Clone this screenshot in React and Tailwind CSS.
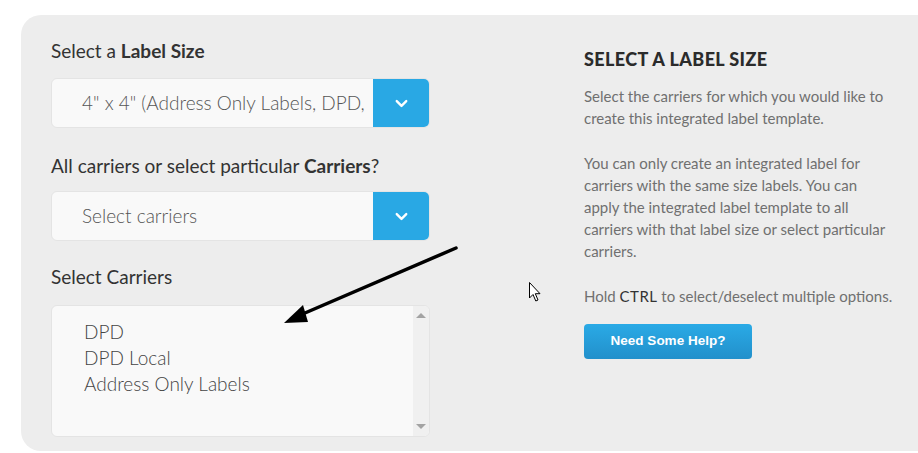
import { ChevronDown } from 'lucide-react';

const font = { fontFamily: 'Lato, "Open Sans", sans-serif' };

const SelectBox = ({ text }) => (
  <div className="flex h-[50px] w-[379px] rounded-[6px] border border-[#e4e4e4] bg-[#f9f9f9] overflow-hidden">
    <div className="flex-1 flex items-center pl-[30px] overflow-hidden whitespace-nowrap text-[19px] font-light text-[#555]">
      {text}
    </div>
    <div className="w-[57px] -my-px -mr-px flex items-center justify-center bg-[#29a8e4] rounded-r-[6px]">
      <ChevronDown size={19} strokeWidth={3} className="text-white" />
    </div>
  </div>
);

const App = () => {
  return (
    <div className="relative w-[918px] h-[453px] bg-white pt-[15px] pl-[21px] overflow-hidden" style={font}>
      <div className="flex h-[436px] bg-[#ededed] rounded-l-[20px] pl-[30px] pt-[24px]">
        <div className="w-[379px] text-[#333]">
          <div className="text-[19px] leading-[24px] mb-[15px]">
            Select a <span className="font-bold">Label Size</span>
          </div>
          <SelectBox text={'4" x 4" (Address Only Labels, DPD,'} />
          <div className="text-[19px] leading-[24px] mt-[26px] mb-[13px]">
            All carriers or select particular <span className="font-bold">Carriers</span>?
          </div>
          <SelectBox text="Select carriers" />
          <div className="text-[19px] leading-[24px] mt-[24px] mb-[16px]">Select Carriers</div>
          <div className="flex h-[132px] w-[379px] rounded-[6px] border border-[#e4e4e4] bg-[#f9f9f9] overflow-hidden">
            <div className="flex-1 pt-[13px] pl-[32px] text-[19px] leading-[26px] font-light text-[#444]">
              <div>DPD</div>
              <div>DPD Local</div>
              <div>Address Only Labels</div>
            </div>
            <div className="w-[16px] bg-[#f0f0f0] flex flex-col items-center justify-between py-[7px]">
              <div className="w-0 h-0 border-l-[5px] border-r-[5px] border-b-[5px] border-l-transparent border-r-transparent border-b-[#a3a3a3]" />
              <div className="w-0 h-0 border-l-[5px] border-r-[5px] border-t-[5px] border-l-transparent border-r-transparent border-t-[#a3a3a3]" />
            </div>
          </div>
        </div>

        <div className="ml-[154px] mt-[9px] w-[330px]">
          <h2 className="text-[18px] leading-[22px] font-black uppercase text-[#2b2b2b] tracking-[0.4px]">
            Select a Label Size
          </h2>
          <div className="mt-[15px] text-[15px] leading-[22px] text-[#707070] whitespace-nowrap">
            <p>
              Select the carriers for which you would like to
              <br />
              create this integrated label template.
            </p>
            <p className="mt-[23px]">
              You can only create an integrated label for
              <br />
              carriers with the same size labels. You can
              <br />
              apply the integrated label template to all
              <br />
              carriers with that label size or select particular
              <br />
              carriers.
            </p>
            <p className="mt-[23px]">
              Hold <span className="text-[#333] tracking-[0.5px]">CTRL</span> to select/deselect multiple options.
            </p>
          </div>
          <button
            className="mt-[17px] w-[168px] h-[35px] rounded-[4px] bg-gradient-to-b from-[#2aaae6] to-[#2290cb] text-white text-[13.5px] font-bold"
            style={{ fontFamily: '"Liberation Sans", Arial, sans-serif' }}
          >
            Need Some Help?
          </button>
        </div>
      </div>

      {/* annotation arrow */}
      <svg className="absolute left-0 top-0 pointer-events-none" width="918" height="453">
        <line x1="456" y1="248" x2="298" y2="316" stroke="#000" strokeWidth="3.5" strokeLinecap="round" />
        <polygon points="284,323 303,305 308,322" fill="#000" />
      </svg>

      {/* mouse cursor */}
      <svg className="absolute left-[529px] top-[282px]" width="14" height="21" viewBox="0 0 14 21">
        <path d="M0.5 0.5 L0.5 16 L4 12.5 L6.8 19 L9 18 L6.3 11.7 L11 11.7 Z" fill="#fff" stroke="#000" strokeWidth="1" strokeLinejoin="miter" />
      </svg>
    </div>
  );
};

export default App;
